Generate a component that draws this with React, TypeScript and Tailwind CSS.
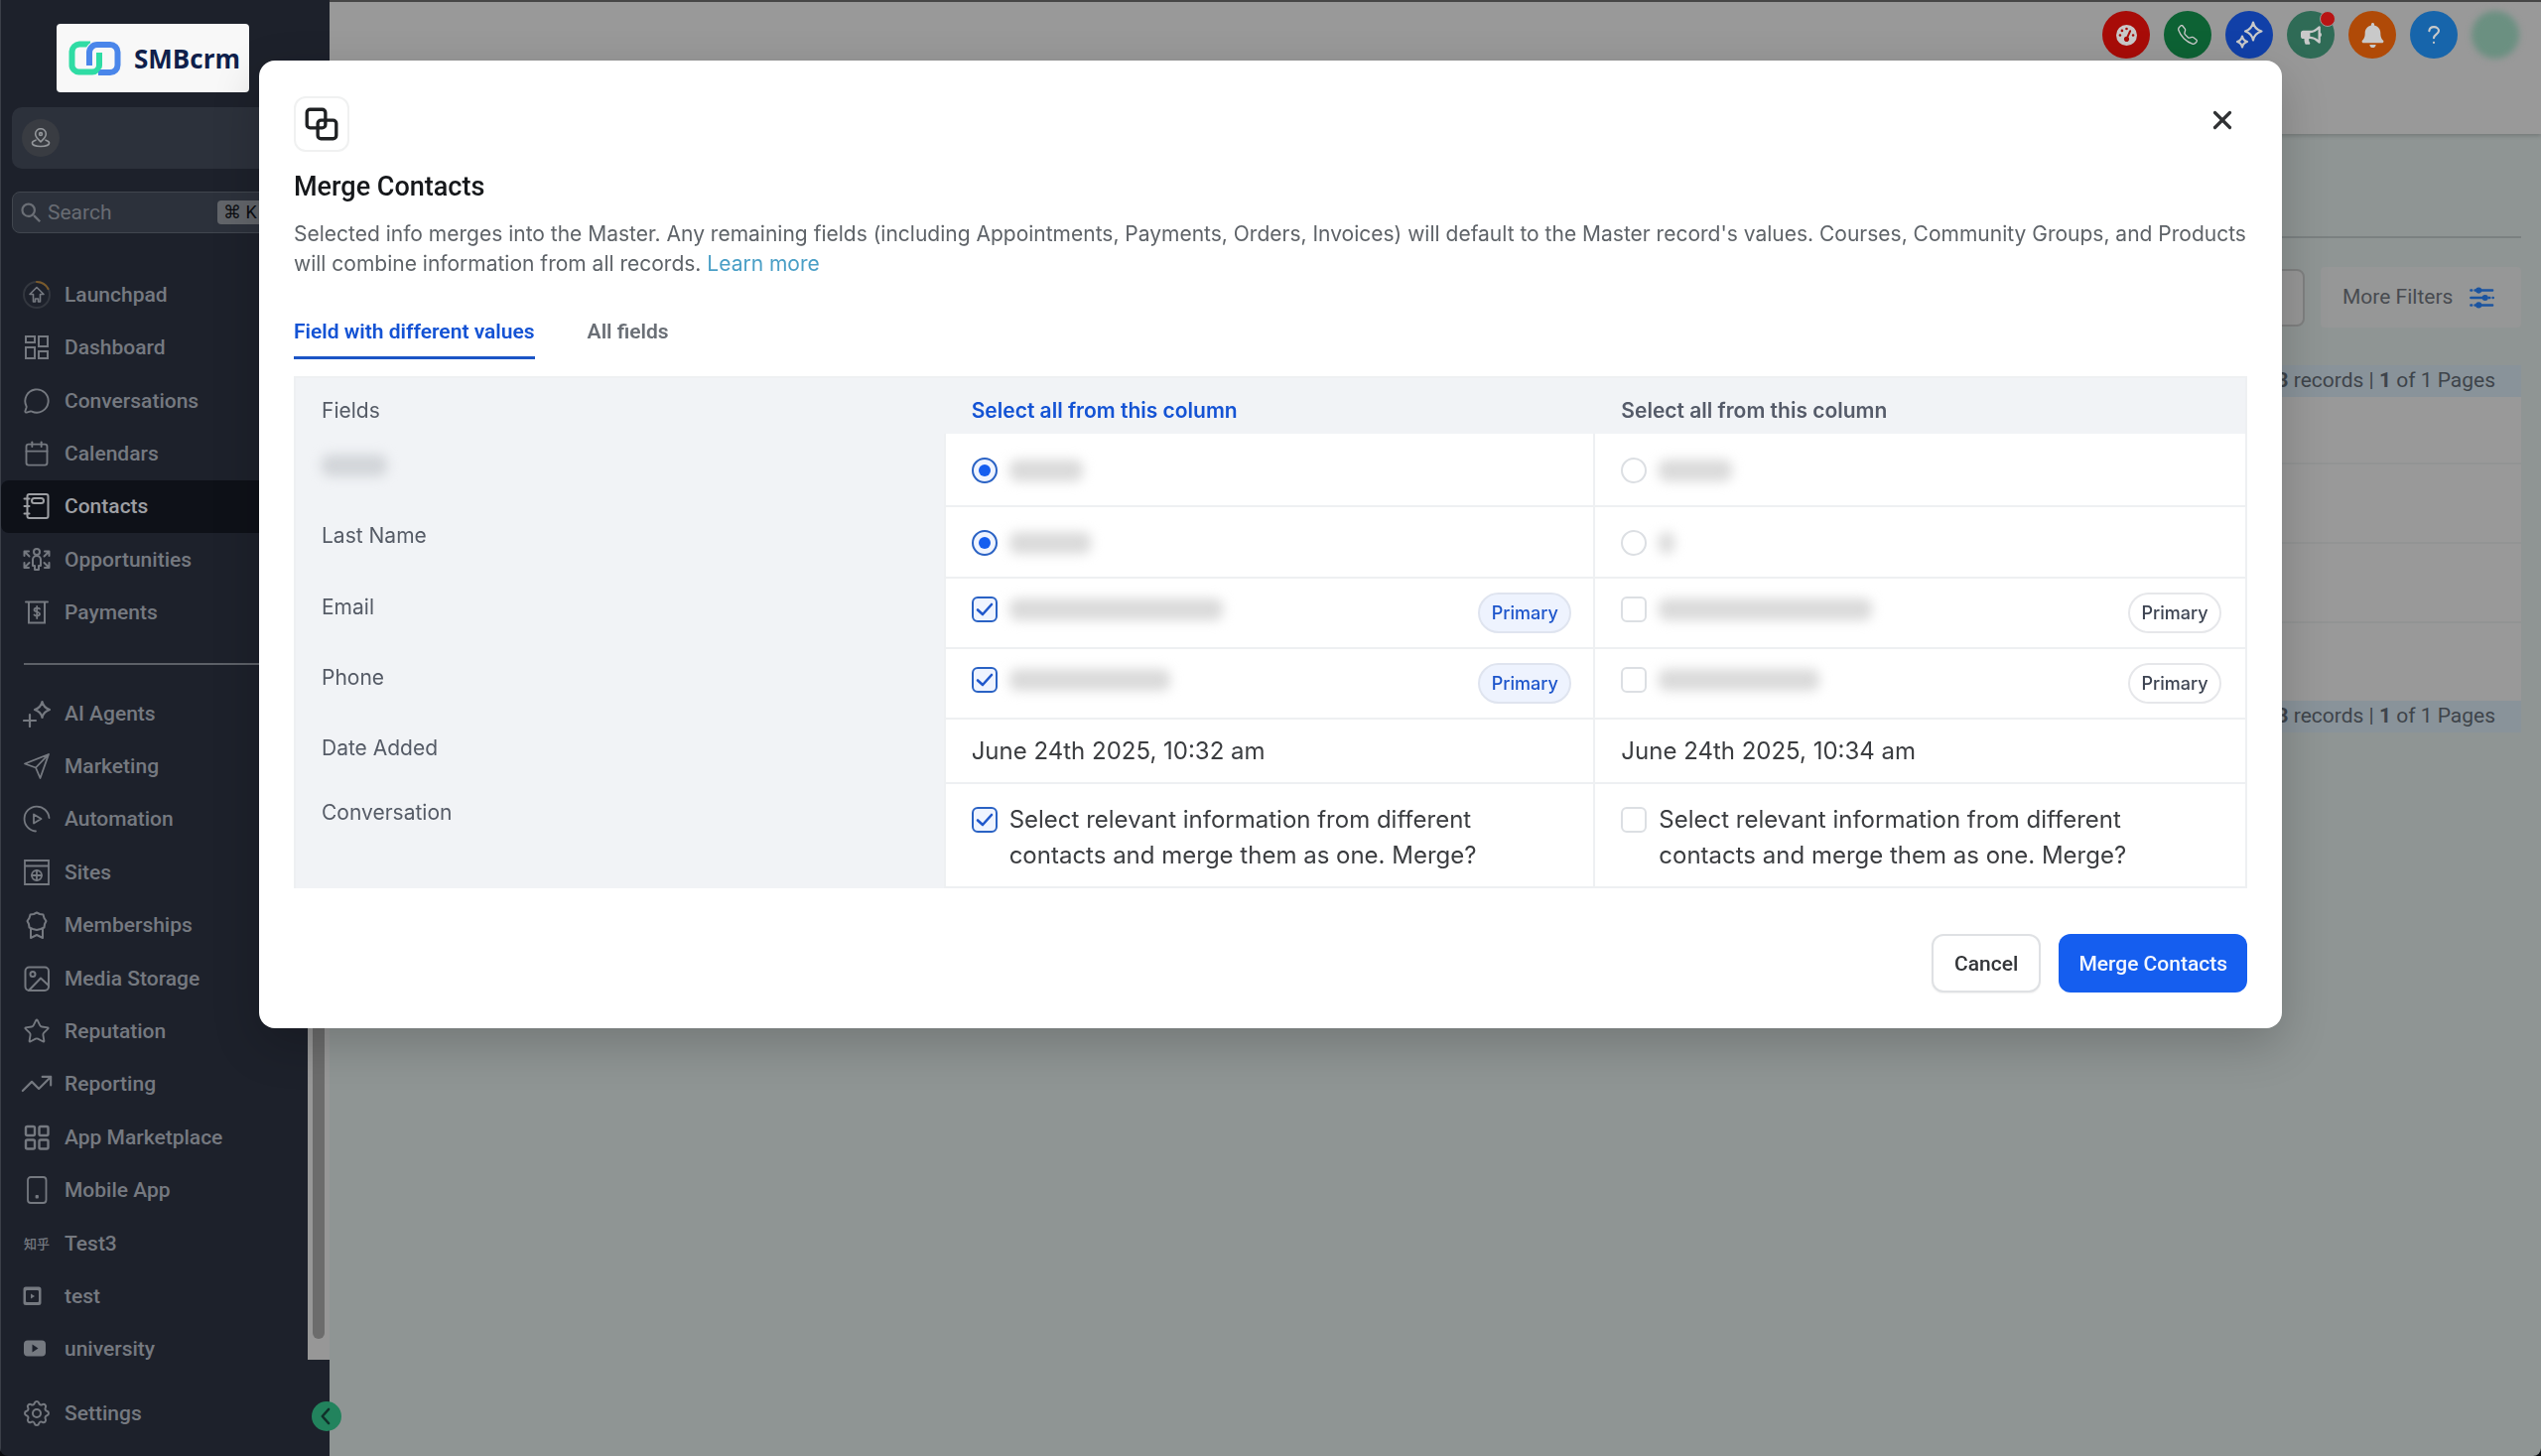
import { useState, type ReactNode } from "react";
import { Calendar, MessageCircle, Star, TrendingUp, X } from "lucide-react";
import { BsTelephone } from "react-icons/bs";
import { FaBell, FaBullhorn } from "react-icons/fa";
import { FaGaugeHigh } from "react-icons/fa6";
import { HiOutlineCog } from "react-icons/hi";
import { MdSearch } from "react-icons/md";

interface IconProps {
  size?: number;
  stroke?: number;
  children: ReactNode;
}

// Shared wrapper for the hand-drawn line icons (28x28 grid)
function LineIcon({ size = 28, stroke = 2, children }: IconProps) {
  return (
    <svg
      width={size}
      height={size}
      viewBox="0 0 28 28"
      fill="none"
      stroke="currentColor"
      strokeWidth={stroke}
      strokeLinecap="round"
      strokeLinejoin="round"
      aria-hidden="true"
    >
      {children}
    </svg>
  );
}

interface NavItem {
  label: string;
  icon: ReactNode;
  active?: boolean;
}

const mainNav: NavItem[] = [
  {
    label: "Launchpad",
    icon: (
      <LineIcon stroke={2}>
        <circle cx="14" cy="14" r="13" stroke="#33373f" />
        <path d="M14 1a13 13 0 0 1 11.500 7" stroke="#7a5a2b" />
        <path d="M14 6.500l7 7h-3.500v7.500h-2v-3h-3v3h-2v-7.500h-3.500z" strokeWidth="1.600" />
      </LineIcon>
    ),
  },
  {
    label: "Dashboard",
    icon: (
      <LineIcon>
        <path d="M3 3h9v6H3zM16 3h9v10h-9zM3 14h9v11H3zM16 18h9v7h-9z" strokeLinejoin="miter" />
      </LineIcon>
    ),
  },
  { label: "Conversations", icon: <MessageCircle size={28} strokeWidth={1.6} /> },
  { label: "Calendars", icon: <Calendar size={28} strokeWidth={1.6} /> },
  {
    label: "Contacts",
    active: true,
    icon: (
      <LineIcon stroke={2}>
        <rect x="4.500" y="2" width="21" height="24" rx="2" />
        <rect x="9" y="6" width="12" height="5" rx="2.500" />
        <path d="M1.500 6.500h5M1.500 14h5M1.500 21.500h5" />
      </LineIcon>
    ),
  },
  {
    label: "Opportunities",
    icon: (
      <LineIcon stroke={2}>
        <circle cx="14" cy="6" r="3" />
        <path d="M10 20v-6a4 4 0 0 1 8 0v6h-2v4h-4v-4z" />
        <path d="M1.500 10V5.500H6M1.500 5.500l5 5M26.500 10V5.500H22M26.500 5.500l-5 5M1.500 17v5H6M1.500 22l5-5M26.500 17v5H22M26.500 22l-5-5" />
      </LineIcon>
    ),
  },
  {
    label: "Payments",
    icon: (
      <LineIcon stroke={2}>
        <path d="M3 3.500h22M6 3.500v21h16v-21" strokeLinejoin="miter" />
        <path d="M17 10.500c-1-1.300-5.500-1.500-5.500 1s5.500 1.500 5.500 4-4.500 2.500-5.500 1M14.200 8v12" strokeWidth="1.800" />
      </LineIcon>
    ),
  },
];

const secondaryNav: NavItem[] = [
  {
    label: "AI Agents",
    icon: (
      <LineIcon stroke={2.2}>
        <path d="M19.500 2c1 4.500 3 6.500 7.500 8-4.500 1.500-6.500 3.500-7.500 8-1-4.500-3-6.500-7.500-8 4.500-1.500 6.500-3.500 7.500-8zM7 15v12M1 21h12" />
      </LineIcon>
    ),
  },
  {
    label: "Marketing",
    icon: (
      <LineIcon stroke={1.8}>
        <path d="M26 2L2 11.500l11 4L17.500 26zM26 2L13 15.500" />
      </LineIcon>
    ),
  },
  {
    label: "Automation",
    icon: (
      <LineIcon stroke={1.8}>
        <path d="M26.500 13A12.500 12.500 0 1 0 13 26.500" />
        <path d="M11 9.500l7.500 4.500-7.500 4.500z" />
      </LineIcon>
    ),
  },
  {
    label: "Sites",
    icon: (
      <LineIcon stroke={1.8}>
        <path d="M2 2h24v24H2zM2 7.500h24" strokeLinejoin="miter" />
        <circle cx="14" cy="17" r="5" />
        <path d="M9 17h10M14 12v10" />
      </LineIcon>
    ),
  },
  {
    label: "Memberships",
    icon: (
      <LineIcon stroke={2}>
        <path d="M14 1.500l3 1.500 3.500.500 1 3.500 2 3-1.500 3-.500 3.500-3.500 1.500-4 1-4-1-3.500-1.500L6 13l-1.500-3 2-3 1-3.500L11 3z" />
        <path d="M8 18v9l6-3 6 3v-9" />
      </LineIcon>
    ),
  },
  {
    label: "Media Storage",
    icon: (
      <LineIcon stroke={2}>
        <rect x="2.500" y="2.500" width="23.500" height="23.500" rx="4" />
        <circle cx="10" cy="9.500" r="2.500" />
        <path d="M6 26l12-12.500 8 7.500" />
      </LineIcon>
    ),
  },
  { label: "Reputation", icon: <Star size={28} strokeWidth={1.6} /> },
  {
    label: "Reporting",
    icon: <TrendingUp size={34} strokeWidth={1.5} className="shrink-0" />,
  },
  {
    label: "App Marketplace",
    icon: (
      <LineIcon stroke={2.4}>
        <rect x="3" y="3" width="9" height="9" rx="1.500" />
        <rect x="16.500" y="3" width="9" height="9" rx="1.500" />
        <rect x="3" y="16.500" width="9" height="9" rx="1.500" />
        <rect x="16.500" y="16.500" width="9" height="9" rx="1.500" />
      </LineIcon>
    ),
  },
  {
    label: "Mobile App",
    icon: (
      <LineIcon stroke={1.8}>
        <rect x="5" y="1" width="18.500" height="26" rx="3" />
        <rect x="13.500" y="20" width="1.500" height="1.500" />
      </LineIcon>
    ),
  },
  {
    label: "Test3",
    icon: (
      <span className="whitespace-nowrap font-['Noto_Sans_CJK_SC',sans-serif] text-[13px] leading-none">
        知乎
      </span>
    ),
  },
  {
    label: "test",
    icon: (
      <svg width="28" height="28" viewBox="0 0 28 28" fill="none" aria-hidden="true">
        <path
          d="M3 4.500h13a2.500 2.500 0 0 1 2.500 2.500v13.500A2.500 2.500 0 0 1 16 23H3A2.500 2.500 0 0 1 .5 20.500V7A2.500 2.500 0 0 1 3 4.500zm0 5v9c0 1 .5 1.500 1.500 1.500h10c1 0 1.500-.5 1.500-1.500v-9C16 8.500 15.500 8 14.500 8h-10C3.500 8 3 8.500 3 9.500z"
          fill="currentColor"
          fillRule="evenodd"
        />
        <path d="M8 11.500l4 2.500-4 2.500z" fill="currentColor" />
      </svg>
    ),
  },
  {
    label: "university",
    icon: (
      <svg width="28" height="28" viewBox="0 0 28 28" fill="none" aria-hidden="true">
        <rect x="1" y="5.500" width="22" height="16" rx="4" fill="currentColor" />
        <path d="M9.500 9.500l6 4-6 4z" fill="#1d212b" />
      </svg>
    ),
  },
];

function NavRow({ label, icon, active }: NavItem) {
  return (
    <a
      href="#"
      className={`flex flex-1 items-center gap-[14px] rounded-lg pl-[22px] text-[21px] leading-6 font-medium ${
        active ? "bg-[#0e1118] text-[#9d9fa3]" : "text-[#757980]"
      }`}
    >
      <span className="flex w-7 shrink-0 items-center justify-center">{icon}</span>
      {label}
    </a>
  );
}

function Logo() {
  return (
    <div className="ml-14 flex h-[69px] w-[194px] items-center justify-between rounded bg-[#f8f8f8] pr-[9px] pl-3">
      <svg width="53" height="36" viewBox="0 0 53 36" fill="none" aria-hidden="true">
        <path
          d="M22 3.500H11A8 8 0 0 0 3.500 11v13A7 7 0 0 0 11 31.500h13a7 7 0 0 0 7-7V12"
          stroke="#2fdca4"
          strokeWidth="6"
        />
        <path
          d="M21 25V12a8 8 0 0 1 8-8h13a7.500 7.500 0 0 1 7.500 7.500v13A7.500 7.500 0 0 1 42 32H30"
          stroke="#f8f8f8"
          strokeWidth="8"
        />
        <path
          d="M21 25V12a8 8 0 0 1 8-8h13a7.500 7.500 0 0 1 7.500 7.500v13A7.500 7.500 0 0 1 42 32H30"
          stroke="#4a86ea"
          strokeWidth="6"
        />
        <path d="M31 13v11a7 7 0 0 1-4 6.500" stroke="#2fdca4" strokeWidth="5" />
      </svg>
      <span className="font-['Open_Sans',sans-serif] text-[26px] leading-none font-bold text-[#0f1f4b]">
        SMBcrm
      </span>
    </div>
  );
}

function Sidebar() {
  return (
    <aside className="relative flex w-[332px] shrink-0 flex-col border-l border-[#3b3f48] bg-[#1d212b] pt-6">
      <Logo />
      <div className="mt-[15px] ml-[11px] flex h-[62px] items-center rounded-[10px] bg-[#2c313b] pl-[10px]">
        <span className="flex size-[38px] items-center justify-center rounded-full bg-[#393c42] text-[#94979b]">
          <LineIcon size={20} stroke={2.2}>
            <path d="M14 19.500C9.500 15.500 6.500 12.500 6.500 8.500a7.500 7.500 0 0 1 15 0c0 4-3 7-7.500 11z" />
            <circle cx="14" cy="8.500" r="2" />
            <path d="M7 17c-3 .8-5 2-5 4 0 3 5.500 5 12 5s12-2 12-5c0-2-2-3.200-5-4" />
          </LineIcon>
        </span>
      </div>
      <div className="mt-[23px] ml-[11px] flex h-[42px] items-center rounded-lg border border-[#41464e] bg-[#2c313b] pl-[5px]">
        <MdSearch size={27} className="shrink-0 text-[#6b6f76]" />
        <input
          type="text"
          aria-label="Search"
          placeholder="Search"
          className="ml-[3px] w-[171px] shrink-0 bg-transparent text-[21px] leading-6 outline-none placeholder:text-[#686c73]"
        />
        <kbd className="flex h-6 w-[70px] items-center rounded bg-[#62656a] pl-[6px] font-[Roboto,'DejaVu_Sans',sans-serif] text-[18px] leading-none text-[#0b0d11]">
          ⌘ K
        </kbd>
      </div>
      <div className="mt-[35px] flex h-[1100px]">
        <nav className="flex-1">
          <div className="flex h-[374px] flex-col">
            {mainNav.map((item) => (
              <NavRow key={item.label} {...item} />
            ))}
          </div>
          <hr className="mt-6 mb-[22px] ml-[23px] border-t-2 border-[#5d6168]" />
          <div className="flex h-[694px] flex-col">
            {secondaryNav.map((item) => (
              <NavRow key={item.label} {...item} />
            ))}
          </div>
        </nav>
        {/* scrollbar */}
        <div className="flex w-[22px] flex-col bg-[#979797] px-[5px] pb-[21px]">
          <div className="flex-1 rounded-full bg-[#6c6c6c]" />
        </div>
      </div>
      <div className="mt-[27px] flex h-[54px]">
        <NavRow label="Settings" icon={<HiOutlineCog size={32} strokeWidth={1.5} className="shrink-0" />} />
      </div>
      <button
        aria-label="Collapse sidebar"
        className="absolute right-[-12px] bottom-[25px] flex size-[30px] items-center justify-center rounded-full bg-[#22835d] text-[#10302a]"
      >
        <LineIcon size={20} stroke={3.4}>
          <path d="M17 4L8 14l9 10" />
        </LineIcon>
      </button>
    </aside>
  );
}

function TopBar() {
  const circle = "relative flex size-12 items-center justify-center rounded-full";
  return (
    <header className="flex h-[135px] items-start justify-end gap-[14px] border-t-2 border-t-[#464646] bg-[#999999] pt-[9px] pr-[22px] text-[#c9c9c9] shadow-[0_2px_4px_rgba(0,0,0,0.18)]">
      <button aria-label="Performance" className={`${circle} bg-[#a80c08]`}>
        <FaGaugeHigh size={21} />
      </button>
      <button aria-label="Call" className={`${circle} bg-[#0d6234]`}>
        <BsTelephone size={20} />
      </button>
      <button aria-label="Ask AI" className={`${circle} bg-[#1140a8]`}>
        <LineIcon stroke={2.2}>
          <path d="M18 1.500c1 5 3 7.500 8.500 9-5.500 1.500-7.500 4-8.500 9-1-5-3-7.500-8-9 5-1.500 7-4 8-9zM7 15.500c.6 3 1.800 4.500 5 5.500-3.200 1-4.400 2.500-5 5.500-.6-3-1.800-4.500-5-5.500 3.200-1 4.400-2.500 5-5.500z" />
        </LineIcon>
      </button>
      <button aria-label="Announcements" className={`${circle} bg-[#2f6b56]`}>
        <FaBullhorn size={21} />
        <span className="absolute top-0 -right-px size-4 rounded-full border border-[#999999] bg-[#b81414]" />
      </button>
      <button aria-label="Notifications" className={`${circle} bg-[#b04a07]`}>
        <FaBell size={25} />
      </button>
      <button aria-label="Help" className={`${circle} bg-[#1765ab]`}>
        <LineIcon size={20} stroke={3}>
          <path d="M7.500 8.500C8 5 10.500 3 14 3c4 0 7 2.300 7 5.500 0 5-7 5-7 10M14 25v.2" />
        </LineIcon>
      </button>
      <span className="size-12 rounded-full bg-[#6b9081] blur-[3px]" />
    </header>
  );
}

function RecordsBar() {
  return (
    <div className="flex h-8 items-center justify-end bg-[#89939a] pr-[26px] text-[21px] text-[#3e444a]">
      <p>
        <b>3</b> records | <b>1</b> of 1 Pages
      </p>
    </div>
  );
}

function Backdrop() {
  return (
    <main className="flex-1 bg-[#8f9594]">
      <TopBar />
      <div className="mr-5 ml-6">
        <div className="mb-[29px] h-[105px] border-b-2 border-[#7b8181]" />
        <div className="flex h-[61px] items-center justify-end gap-4">
          <input
            type="text"
            aria-label="Search contacts"
            className="h-[58px] w-[480px] rounded-lg border-2 border-[#7f8080] bg-[#979797]"
          />
          <button className="flex h-[61px] w-[202px] items-center gap-4 rounded bg-[#969797] pl-[22px] text-[21px] text-[#484b50]">
            More Filters
            <LineIcon size={26} stroke={2.6}>
              <g className="text-[#1b54a0]" stroke="currentColor">
                <path d="M2.500 6h1M7 6h19M2.500 14h15.500M22 14h1M26.500 14h.200M2.500 22h1M7 22h19" />
                <circle cx="11" cy="6" r="2" />
                <circle cx="18" cy="14" r="2" />
                <circle cx="11" cy="22" r="2" />
              </g>
            </LineIcon>
          </button>
        </div>
        <div className="mt-[38px]">
          <RecordsBar />
          <div className="divide-y-2 divide-[#929494] bg-[#999999]">
            <div className="h-[68px]" />
            <div className="h-20" />
            <div className="h-20" />
            <div className="h-[78px]" />
          </div>
          <RecordsBar />
        </div>
      </div>
    </main>
  );
}

// Redacted value
function Hidden({ className }: { className: string }) {
  return <span className={`block h-[22px] rounded-lg blur-[6px] ${className}`} />;
}

interface ChoiceProps {
  type: "radio" | "checkbox";
  name: string;
  label: string;
  checked: boolean;
  onChange: () => void;
}

function Choice({ type, name, label, checked, onChange }: ChoiceProps) {
  return (
    <span className="grid size-[26px] shrink-0 place-items-center">
      <input
        type={type}
        name={name}
        aria-label={label}
        checked={checked}
        onChange={onChange}
        className={`col-start-1 row-start-1 size-[26px] appearance-none border-2 ${
          type === "radio" ? "rounded-full" : "rounded-md"
        } ${checked ? "border-[#2a62c4] bg-[#eff4ff]" : "border-[#dcdfe3] bg-white"}`}
      />
      {checked && type === "radio" && (
        <span className="pointer-events-none col-start-1 row-start-1 size-3 rounded-full bg-[#155eef]" />
      )}
      {checked && type === "checkbox" && (
        <svg
          className="pointer-events-none col-start-1 row-start-1"
          width="18"
          height="14"
          viewBox="0 0 18 14"
          fill="none"
          stroke="#2058cc"
          strokeWidth="2.600"
          strokeLinecap="round"
          strokeLinejoin="round"
        >
          <path d="M2 7.500l5 4.500L16 2" />
        </svg>
      )}
    </span>
  );
}

function PrimaryBadge({ selected }: { selected: boolean }) {
  return (
    <button
      className={`h-[41px] w-[94px] rounded-full border-2 text-[18px] leading-none font-medium ${
        selected
          ? "border-[#dfe4ef] bg-[#eef3fe] text-[#1d55cb]"
          : "border-[#e6e7ea] bg-white text-[#3d4452]"
      }`}
    >
      Primary
    </button>
  );
}

interface FieldRow {
  label: string;
  height: string;
  kind: "radio" | "checkbox" | "date" | "conversation";
  values: [string, string];
}

const rows: FieldRow[] = [
  { label: "", height: "h-[74px]", kind: "radio", values: ["w-[74px]", "w-[74px]"] },
  { label: "Last Name", height: "h-[72px]", kind: "radio", values: ["w-[82px]", "w-4"] },
  { label: "Email", height: "h-[71px]", kind: "checkbox", values: ["w-[215px]", "w-[215px]"] },
  { label: "Phone", height: "h-[71px]", kind: "checkbox", values: ["w-[162px]", "w-[162px]"] },
  {
    label: "Date Added",
    height: "h-[65px]",
    kind: "date",
    values: ["June 24th 2025, 10:32 am", "June 24th 2025, 10:34 am"],
  },
  {
    label: "Conversation",
    height: "h-[105px]",
    kind: "conversation",
    values: [
      "Select relevant information from different contacts and merge them as one. Merge?",
      "Select relevant information from different contacts and merge them as one. Merge?",
    ],
  },
];

interface CellProps {
  row: FieldRow;
  column: number;
  master: number;
  onSelect: (column: number) => void;
}

function ValueCell({ row, column, master, onSelect }: CellProps) {
  const selected = master === column;
  const value = row.values[column];
  const choice = (type: "radio" | "checkbox") => (
    <Choice
      type={type}
      name={`${row.label || "First"}-${column}`}
      label={row.label || "First"}
      checked={selected}
      onChange={() => onSelect(column)}
    />
  );

  if (row.kind === "date") {
    return <p className="text-[24px] leading-9 text-[#3b3d40]">{value}</p>;
  }
  if (row.kind === "radio") {
    return (
      <div className="flex items-center gap-3 pt-0.5">
        {choice("radio")}
        <Hidden className={`bg-[#dadada] ${value}`} />
      </div>
    );
  }
  if (row.kind === "checkbox") {
    return (
      <div className="flex items-start justify-between">
        <div className="flex items-center gap-3 pt-1">
          {choice("checkbox")}
          <Hidden className={`bg-[#dadada] ${value}`} />
        </div>
        <PrimaryBadge selected={selected} />
      </div>
    );
  }
  return (
    <div className="flex items-start gap-3 pt-1">
      <div className="pt-[5px]">{choice("checkbox")}</div>
      <p className="max-w-[500px] text-[24px] leading-9 text-[#3b3d40]">{value}</p>
    </div>
  );
}

function MergeTable() {
  const [master, setMaster] = useState(0);
  return (
    <table className="w-full table-fixed border-separate border-spacing-0 border-2 border-b-0 border-[#eef0f2] font-[Inter,sans-serif]">
      <thead>
        <tr className="bg-[#f1f3f6] text-left text-[21px] leading-6">
          <th className="h-14 pt-[10px] pl-[26px] font-normal text-[#555b66]">Fields</th>
          {[0, 1].map((column) => (
            <th key={column} className="h-14 pt-[10px] pl-[26px] font-semibold">
              <button
                onClick={() => setMaster(column)}
                className={master === column ? "text-[#1453d4]" : "text-[#555b69]"}
              >
                Select all from this column
              </button>
            </th>
          ))}
        </tr>
      </thead>
      <tbody>
        {rows.map((row) => (
          <tr key={row.label} className={row.height}>
            <th
              scope="row"
              className="border-r-2 border-[#eef0f2] bg-[#f1f3f6] pt-[17px] pl-[26px] text-left align-top text-[21px] leading-6 font-normal text-[#555b66]"
            >
              {row.label || <Hidden className="mt-1 w-[66px] bg-[#d2d5d9]" />}
            </th>
            {[0, 1].map((column) => (
              <td
                key={column}
                className={`border-b-2 border-[#eef0f2] bg-white pl-[26px] ${
                  column === 0 ? "border-r-2 pr-[22px]" : "pr-6"
                }`}
              >
                <ValueCell row={row} column={column} master={master} onSelect={setMaster} />
              </td>
            ))}
          </tr>
        ))}
      </tbody>
    </table>
  );
}

function MergeDialog() {
  const [tab, setTab] = useState("different");
  const tabs = [
    { id: "different", label: "Field with different values" },
    { id: "all", label: "All fields" },
  ];
  return (
    <div className="fixed inset-0 flex items-start px-[261px] pt-[61px]">
      <div
        role="dialog"
        aria-label="Merge Contacts"
        className="w-full rounded-2xl bg-white px-[35px] py-9 shadow-[0_16px_48px_rgba(0,0,0,0.2)]"
      >
        <div className="flex items-start justify-between">
          <span className="flex size-14 items-center justify-center rounded-xl border-2 border-[#f0f1f1] text-[#1f2123]">
            <LineIcon size={36} stroke={2.6}>
              <rect x="2.500" y="2.500" width="14.500" height="14.500" rx="2.500" />
              <rect x="11" y="11" width="14.500" height="14.500" rx="2.500" />
            </LineIcon>
          </span>
          <button aria-label="Close" className="mt-[9px] mr-[10px] text-[#303234]">
            <X size={30} strokeWidth={2.6} />
          </button>
        </div>
        <h1 className="mt-[19px] text-[27px] leading-8 font-medium text-[#16181b]">Merge Contacts</h1>
        <p className="mt-[17px] font-[Inter,sans-serif] text-[21px] leading-[30px] text-[#5e6368]">
          Selected info merges into the Master. Any remaining fields (including Appointments, Payments,
          Orders, Invoices) will default to the Master record's values. Courses, Community Groups, and
          Products will combine information from all records.{" "}
          <a href="#" className="text-[#4a9fc6]">
            Learn more
          </a>
        </p>
        <div className="mt-[39px] mb-[17px] flex gap-[53px]" role="tablist">
          {tabs.map((item) => (
            <button
              key={item.id}
              role="tab"
              aria-selected={tab === item.id}
              onClick={() => setTab(item.id)}
              className={`border-b-[3px] pb-[11px] text-[21px] leading-7 font-semibold ${
                tab === item.id
                  ? "border-[#1c55c6] text-[#1453d4]"
                  : "border-transparent text-[#6a6f76]"
              }`}
            >
              {item.label}
            </button>
          ))}
        </div>
        <MergeTable />
        <div className="mt-[46px] flex justify-end gap-[18px] text-[21px] leading-6 font-medium">
          <button className="h-[59px] rounded-xl border-2 border-[#dfe1e4] bg-white px-[21px] text-[#333538] shadow-[0_1px_2px_rgba(0,0,0,0.06)]">
            Cancel
          </button>
          <button className="h-[59px] rounded-xl bg-[#155eef] px-5 text-[#f4f7fe]">Merge Contacts</button>
        </div>
      </div>
    </div>
  );
}

export default function App() {
  return (
    <div className="bg-[#0a0c10] font-[Roboto,sans-serif]">
      <div className="flex min-h-screen overflow-hidden rounded-b-lg">
        <Sidebar />
        <Backdrop />
      </div>
      <MergeDialog />
    </div>
  );
}
